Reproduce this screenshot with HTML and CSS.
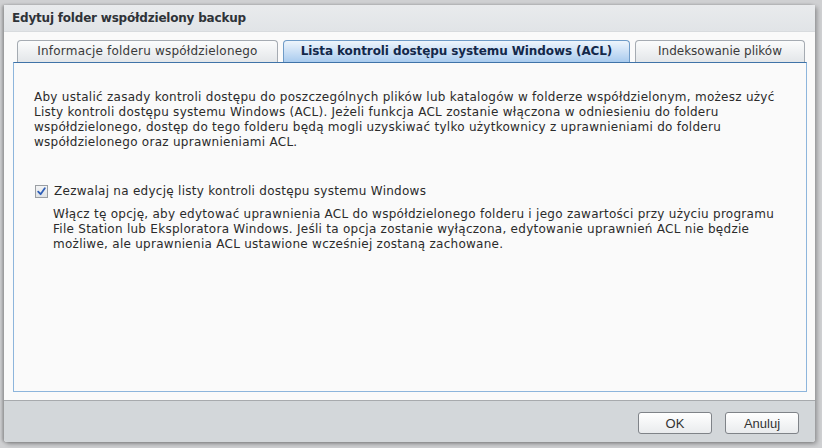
FILE: index.html
```html
<!DOCTYPE html>
<html lang="pl">
<head>
<meta charset="utf-8">
<title>Edytuj folder współdzielony backup</title>
<link rel="stylesheet" href="styles.css">
</head>
<body>
<div class="window">
  <div class="titlebar">Edytuj folder współdzielony backup</div>
  <div class="content">
    <div class="tabs">
      <div class="tab tab1">Informacje folderu współdzielonego</div>
      <div class="tab tab2 active">Lista kontroli dostępu systemu Windows (ACL)</div>
      <div class="tab tab3">Indeksowanie plików</div>
    </div>
    <div class="panel">
      <p class="intro">Aby ustalić zasady kontroli dostępu do poszczególnych plików lub katalogów w folderze współdzielonym, możesz użyć<br>Listy kontroli dostępu systemu Windows (ACL). Jeżeli funkcja ACL zostanie włączona w odniesieniu do folderu<br>współdzielonego, dostęp do tego folderu będą mogli uzyskiwać tylko użytkownicy z uprawnieniami do folderu<br>współdzielonego oraz uprawnieniami ACL.</p>
      <label class="check">
        <span class="box"><svg width="9" height="9" viewBox="0 0 9 9"><path d="M1.2 4.6 L3.6 7.2 L7.8 1.2" fill="none" stroke="#2f5fb8" stroke-width="1.8" stroke-linecap="round" stroke-linejoin="round"/></svg></span>
        <span>Zezwalaj na edycję listy kontroli dostępu systemu Windows</span>
      </label>
      <p class="desc">Włącz tę opcję, aby edytować uprawnienia ACL do współdzielonego folderu i jego zawartości przy użyciu programu<br>File Station lub Eksploratora Windows. Jeśli ta opcja zostanie wyłączona, edytowanie uprawnień ACL nie będzie<br>możliwe, ale uprawnienia ACL ustawione wcześniej zostaną zachowane.</p>
    </div>
  </div>
  <div class="footer">
    <button class="btn">OK</button>
    <button class="btn">Anuluj</button>
  </div>
</div>
</body>
</html>
```
FILE: styles.css
```css
html, body {
  margin: 0;
  padding: 0;
}
body {
  width: 822px;
  height: 448px;
  background: #cfd0d2;
  font-family: "DejaVu Sans", Verdana, sans-serif;
  color: #333;
  overflow: hidden;
}
.window {
  margin: 5px 0 0 4px;
  width: 811px;
  height: 437px;
  display: flex;
  flex-direction: column;
  background: #fafafa;
  box-shadow: -2px 0 3px rgba(0,0,0,0.25), 2px 2px 4px rgba(0,0,0,0.3);
  border-radius: 2px 2px 3px 3px;
}
.titlebar {
  height: 27px;
  box-sizing: border-box;
  padding: 6px 0 0 8px;
  background: linear-gradient(#e9ebed, #e1e4e7);
  border-bottom: 1px solid #d8dbde;
  font-size: 12px;
  font-weight: bold;
  color: #2f3338;
  letter-spacing: -0.2px;
}
.content {
  flex: 1;
  padding: 8px 8px 8px 9px;
  display: flex;
  flex-direction: column;
  background: #fafafa;
}
.tabs {
  display: flex;
  gap: 5px;
  padding-left: 4px;
  height: 22px;
}
.tab {
  box-sizing: border-box;
  height: 22px;
  border: 1px solid #a5abb2;
  border-bottom: none;
  border-radius: 4px 4px 0 0;
  background: linear-gradient(#fbfcfc, #e3e6e9);
  font-size: 12px;
  color: #3a3a3a;
  text-align: center;
  line-height: 21px;
  letter-spacing: 0.2px;
}
.tab1 { width: 261px; }
.tab2 { width: 347px; }
.tab3 { width: 170px; letter-spacing: 0; }
.tab.active {
  background: linear-gradient(#eef5fc 0%, #cfe2f6 45%, #a9cbee 100%);
  border-color: #6f9bc7;
  font-weight: bold;
  color: #13284a;
  letter-spacing: -0.1px;
}
.panel {
  flex: 1;
  border: 1px solid #8db5dc;
  border-top: 1px solid #3f73a8;
  background: #fafafa;
  padding: 27px 20px 0 20px;
  font-size: 12px;
  line-height: 15px;
  color: #2b2b2b;
  letter-spacing: 0.27px;
}
.intro {
  margin: 0;
}
.check {
  display: flex;
  align-items: center;
  gap: 6px;
  margin-top: 34px;
  margin-left: 1px;
}
.box {
  width: 11px;
  height: 11px;
  border: 1px solid #9a9ea3;
  background: linear-gradient(#f3f4f5, #dfe2e5);
  display: flex;
  align-items: center;
  justify-content: center;
}
.desc {
  margin: 8px 0 0 19px;
}
.footer {
  height: 42px;
  box-sizing: border-box;
  border-top: 1px solid #a7aaad;
  background: #d3d7da;
  border-radius: 0 0 3px 3px;
  display: flex;
  justify-content: flex-end;
  align-items: flex-start;
  gap: 13px;
  padding: 11px 16px 0 0;
}
.btn {
  width: 74px;
  height: 22px;
  border: 1px solid #7f8388;
  border-radius: 3px;
  background: linear-gradient(#ffffff, #e9ebed);
  font-family: "Liberation Sans", Arial, sans-serif;
  font-size: 13px;
  color: #333;
  padding: 0;
}
```
